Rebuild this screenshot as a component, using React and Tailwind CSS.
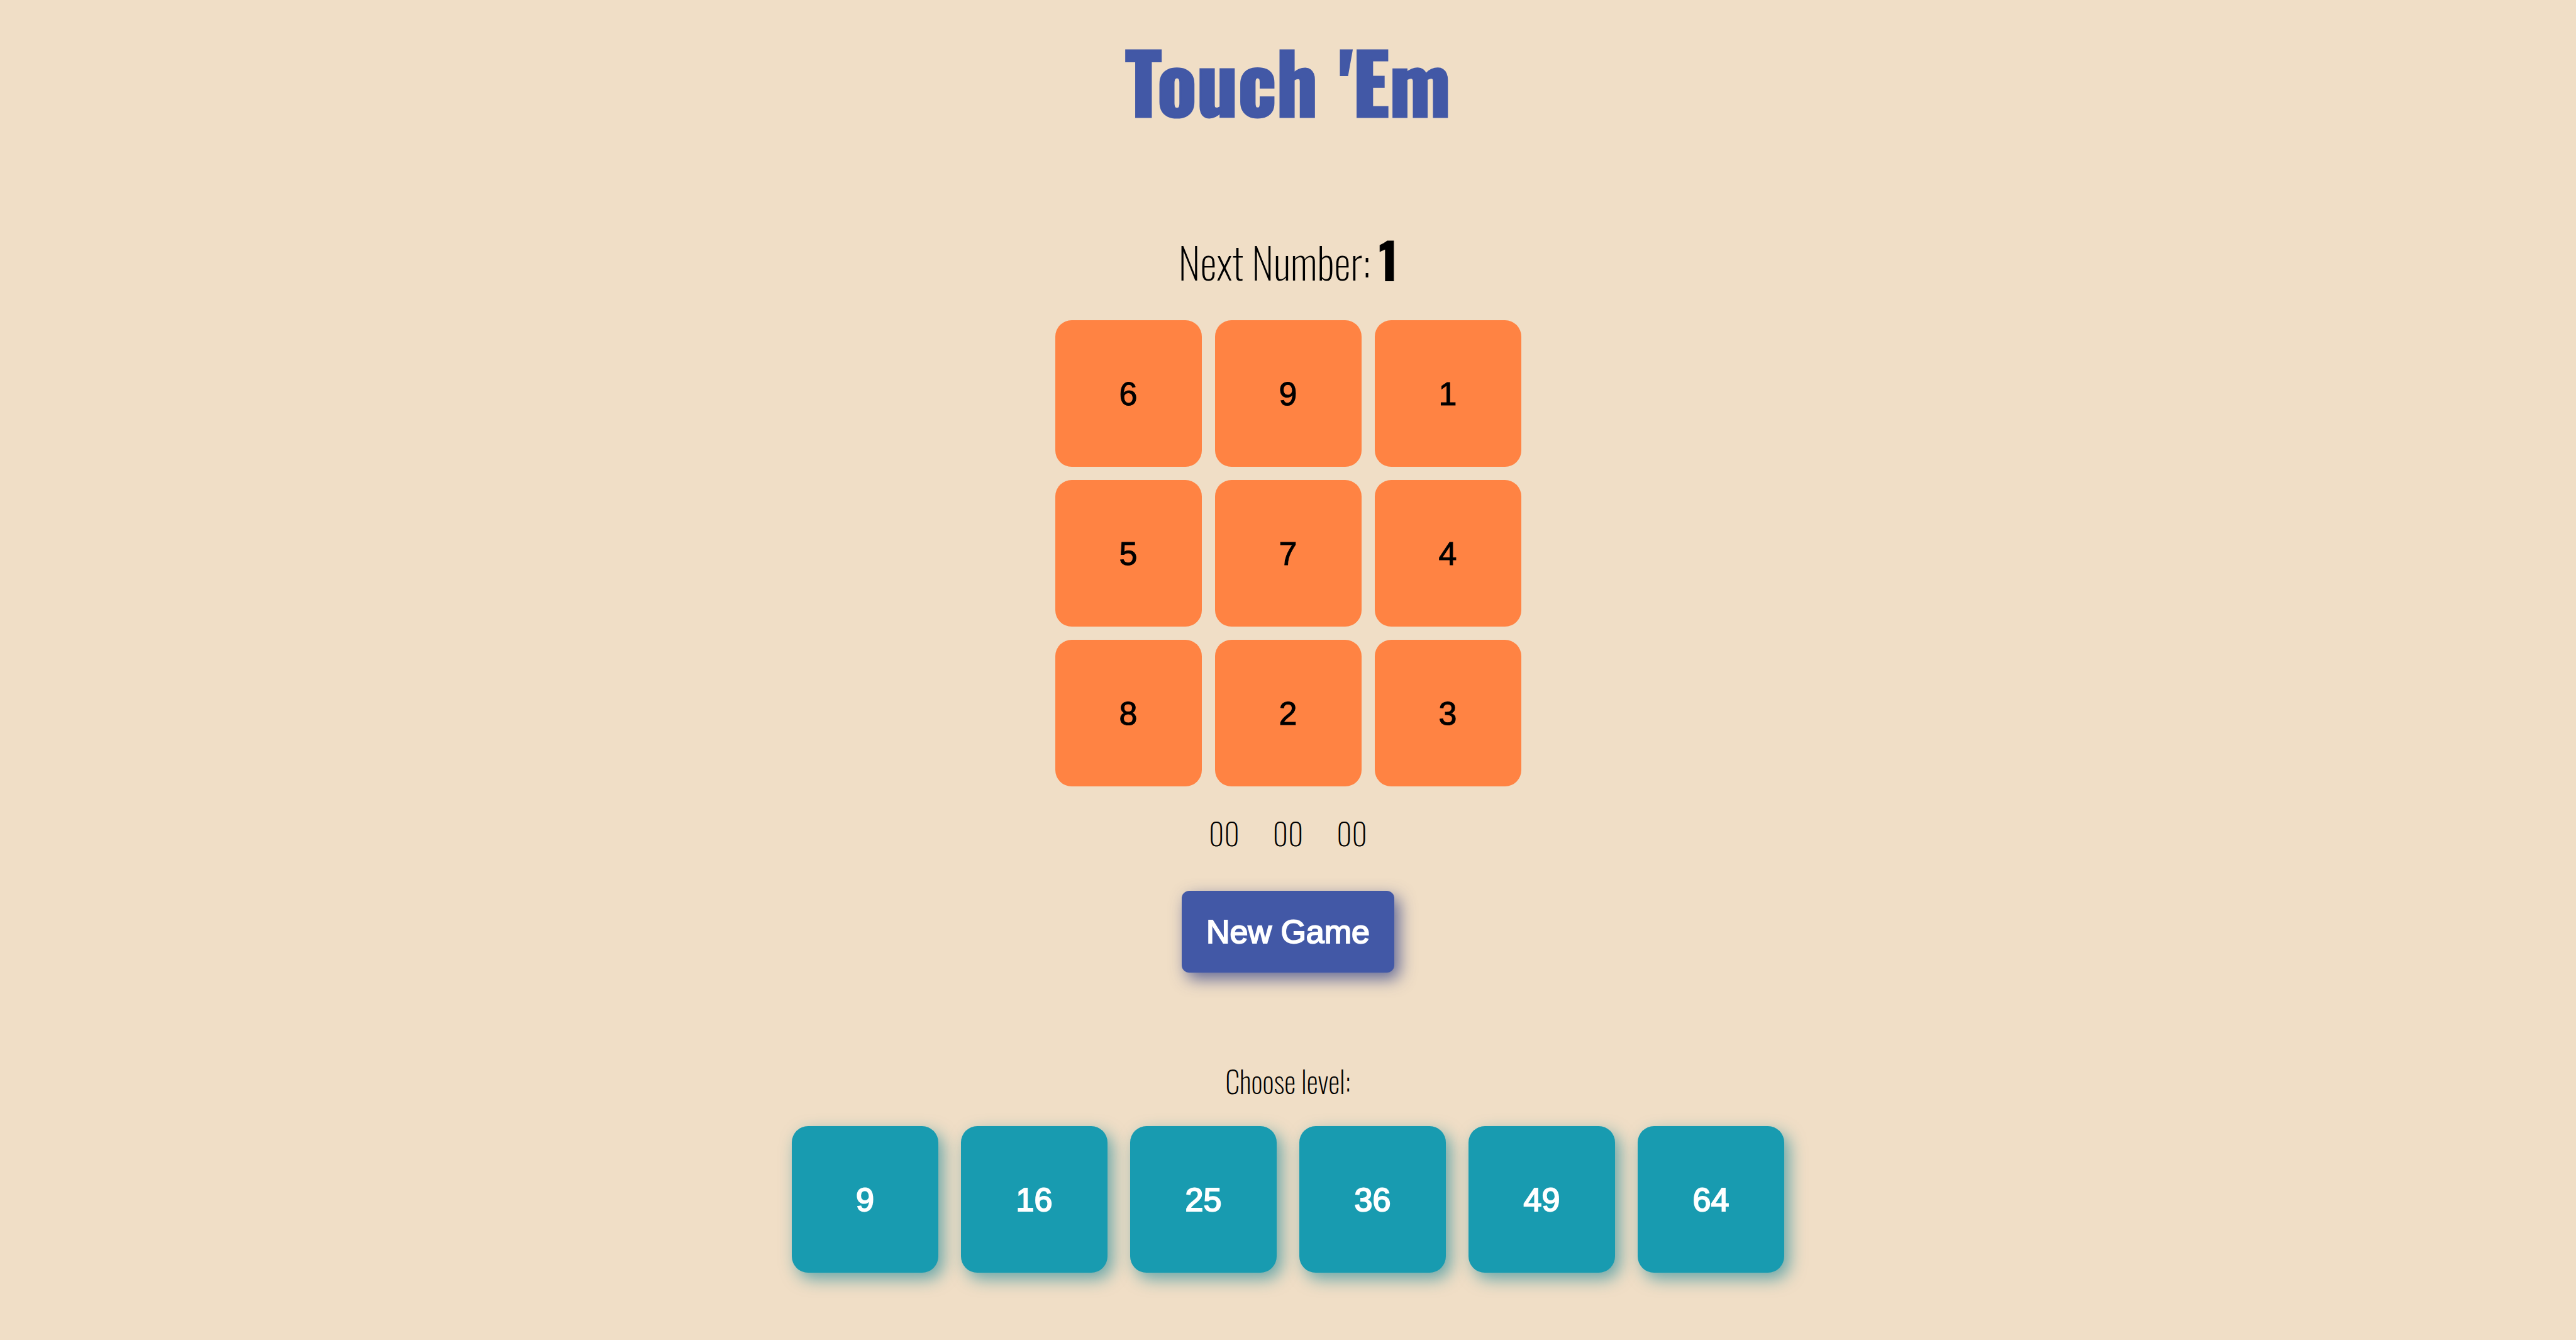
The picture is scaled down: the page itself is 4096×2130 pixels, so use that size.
import { useState } from "react";

const START = [6, 9, 1, 5, 7, 4, 8, 2, 3];
const LEVELS = [9, 16, 25, 36, 49, 64];

function Tile({ value, onClick }) {
  return (
    <button
      type="button"
      onClick={onClick}
      className="size-[233px] rounded-[26px] bg-[#ff8343] font-['Liberation_Sans',sans-serif] text-[52px] text-black [-webkit-text-stroke:1px_black]"
    >
      {value}
    </button>
  );
}

function LevelButton({ value }) {
  return (
    <button
      type="button"
      className="size-[233px] rounded-[26px] bg-[#189bb0] font-['Liberation_Sans',sans-serif] text-[52px] text-white shadow-[8px_10px_26px_rgba(20,132,152,0.62)] [-webkit-text-stroke:2px_white]"
    >
      {value}
    </button>
  );
}

export default function App() {
  const [next, setNext] = useState(1);

  return (
    <main className="flex min-h-screen flex-col items-center bg-[#f0dec6] font-['Oswald',sans-serif] font-extralight text-black">
      <h1 className="mt-8 text-[130px] leading-[192px] font-bold text-[#4258a6] [-webkit-text-stroke:3px_#4258a6]">
        Touch 'Em
      </h1>

      <p className="mt-[140px] text-[68px] leading-[104px]">
        Next Number:{" "}
        <strong className="text-[78px] leading-none font-bold [-webkit-text-stroke:1px_black]">{next}</strong>
      </p>

      <section aria-label="Board" className="mt-[41px] grid grid-cols-3 gap-[21px]">
        {START.map((n) => (
          <Tile key={n} value={n} onClick={() => n === next && setNext(next + 1)} />
        ))}
      </section>

      <div role="timer" className="mt-[36px] flex gap-[53px] text-[47px] leading-[76px]">
        <span>00</span>
        <span>00</span>
        <span>00</span>
      </div>

      <button
        type="button"
        onClick={() => setNext(1)}
        className="mt-[54px] h-[130px] rounded-xl bg-[#4258a6] px-[39px] font-['Liberation_Sans',sans-serif] text-[52px] text-white shadow-[8px_10px_26px_rgba(62,76,140,0.8)] [-webkit-text-stroke:2px_white]"
      >
        New Game
      </button>

      <p className="mt-[136px] text-[47px] leading-[72px]">Choose level:</p>

      <section aria-label="Levels" className="mt-[36px] flex flex-wrap justify-center gap-[36px]">
        {LEVELS.map((n) => (
          <LevelButton key={n} value={n} />
        ))}
      </section>
    </main>
  );
}
